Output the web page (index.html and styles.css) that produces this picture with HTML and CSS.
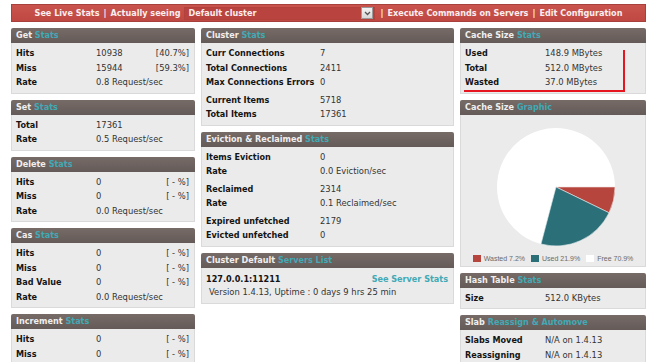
FILE: index.html
```html
<!DOCTYPE html>
<html lang="en">
<head>
    <meta charset="UTF-8">
    <title>phpMemcachedAdmin - Live Stats</title>
    <link rel="stylesheet" href="styles.css">
</head>
<body>

    <div class="topbar">
        <a href="#">See Live Stats</a>
        <span class="sep">|</span>
        <span>Actually seeing</span>
        <span class="cluster-select">
            <span>Default cluster</span>
            <span class="arrow">
                <svg width="7" height="5" viewBox="0 0 7 5"><path d="M1 1 L3.5 3.5 L6 1" fill="none" stroke="#555" stroke-width="1.3"/></svg>
            </span>
        </span>
        <span class="sep">|</span>
        <a href="#">Execute Commands on Servers</a>
        <span class="sep">|</span>
        <a href="#">Edit Configuration</a>
    </div>

    <div class="columns">
        <!-- colonna sinistra -->
        <div class="col col-left">
            <div class="panel">
                <div class="panel-head">Get <span class="hl">Stats</span></div>
                <div class="panel-body">
                    <div class="row"><span class="label">Hits</span><span class="value">10938</span><span class="pct">[40.7%]</span></div>
                    <div class="row"><span class="label">Miss</span><span class="value">15944</span><span class="pct">[59.3%]</span></div>
                    <div class="row"><span class="label">Rate</span><span class="value">0.8 Request/sec</span></div>
                </div>
            </div>
            <div class="panel">
                <div class="panel-head">Set <span class="hl">Stats</span></div>
                <div class="panel-body">
                    <div class="row"><span class="label">Total</span><span class="value">17361</span></div>
                    <div class="row"><span class="label">Rate</span><span class="value">0.5 Request/sec</span></div>
                </div>
            </div>
            <div class="panel">
                <div class="panel-head">Delete <span class="hl">Stats</span></div>
                <div class="panel-body">
                    <div class="row"><span class="label">Hits</span><span class="value">0</span><span class="pct">[ - %]</span></div>
                    <div class="row"><span class="label">Miss</span><span class="value">0</span><span class="pct">[ - %]</span></div>
                    <div class="row"><span class="label">Rate</span><span class="value">0.0 Request/sec</span></div>
                </div>
            </div>
            <div class="panel">
                <div class="panel-head">Cas <span class="hl">Stats</span></div>
                <div class="panel-body">
                    <div class="row"><span class="label">Hits</span><span class="value">0</span><span class="pct">[ - %]</span></div>
                    <div class="row"><span class="label">Miss</span><span class="value">0</span><span class="pct">[ - %]</span></div>
                    <div class="row"><span class="label">Bad Value</span><span class="value">0</span><span class="pct">[ - %]</span></div>
                    <div class="row"><span class="label">Rate</span><span class="value">0.0 Request/sec</span></div>
                </div>
            </div>
            <div class="panel">
                <div class="panel-head">Increment <span class="hl">Stats</span></div>
                <div class="panel-body">
                    <div class="row"><span class="label">Hits</span><span class="value">0</span><span class="pct">[ - %]</span></div>
                    <div class="row"><span class="label">Miss</span><span class="value">0</span><span class="pct">[ - %]</span></div>
                </div>
            </div>
        </div>

        <!-- colonna centrale -->
        <div class="col col-mid">
            <div class="panel">
                <div class="panel-head">Cluster <span class="hl">Stats</span></div>
                <div class="panel-body">
                    <div class="group">
                        <div class="row"><span class="label">Curr Connections</span><span class="value">7</span></div>
                        <div class="row"><span class="label">Total Connections</span><span class="value">2411</span></div>
                        <div class="row"><span class="label">Max Connections Errors</span><span class="value">0</span></div>
                    </div>
                    <div class="group">
                        <div class="row"><span class="label">Current Items</span><span class="value">5718</span></div>
                        <div class="row"><span class="label">Total Items</span><span class="value">17361</span></div>
                    </div>
                </div>
            </div>
            <div class="panel">
                <div class="panel-head">Eviction &amp; Reclaimed <span class="hl">Stats</span></div>
                <div class="panel-body">
                    <div class="group">
                        <div class="row"><span class="label">Items Eviction</span><span class="value">0</span></div>
                        <div class="row"><span class="label">Rate</span><span class="value">0.0 Eviction/sec</span></div>
                    </div>
                    <div class="group">
                        <div class="row"><span class="label">Reclaimed</span><span class="value">2314</span></div>
                        <div class="row"><span class="label">Rate</span><span class="value">0.1 Reclaimed/sec</span></div>
                    </div>
                    <div class="group">
                        <div class="row"><span class="label">Expired unfetched</span><span class="value">2179</span></div>
                        <div class="row"><span class="label">Evicted unfetched</span><span class="value">0</span></div>
                    </div>
                </div>
            </div>
            <div class="panel">
                <div class="panel-head">Cluster Default <span class="hl">Servers List</span></div>
                <div class="panel-body servers">
                    <div class="server-row">
                        <span class="label">127.0.0.1:11211</span>
                        <a href="#" class="server-link">See Server Stats</a>
                    </div>
                    <div class="server-info">Version 1.4.13, Uptime : 0 days 9 hrs 25 min</div>
                </div>
            </div>
        </div>

        <!-- colonna destra -->
        <div class="col col-right">
            <div class="panel cache-size">
                <div class="panel-head">Cache Size <span class="hl">Stats</span></div>
                <div class="panel-body">
                    <div class="row"><span class="label">Used</span><span class="value">148.9 MBytes</span></div>
                    <div class="row"><span class="label">Total</span><span class="value">512.0 MBytes</span></div>
                    <div class="row"><span class="label">Wasted</span><span class="value">37.0 MBytes</span></div>
                </div>
                <div class="marker"></div>
            </div>
            <div class="panel">
                <div class="panel-head">Cache Size <span class="hl">Graphic</span></div>
                <div class="panel-body chart">
                    <svg class="pie" width="184" height="136" viewBox="0 0 184 136">
                        <path d="M95 72 L79.97 129.05 A59 59 0 1 1 154 72 Z" fill="#ffffff"/>
                        <path d="M95 72 L154 72 A59 59 0 0 1 148.07 97.79 Z" fill="#b5453d" stroke="#f3e3e1" stroke-width="0.6"/>
                        <path d="M95 72 L148.07 97.79 A59 59 0 0 1 79.97 129.05 Z" fill="#2b6f79" stroke="#e6eeee" stroke-width="0.6"/>
                    </svg>
                    <div class="legend">
                        <span class="key"><i class="sw sw-wasted"></i>Wasted 7.2%</span>
                        <span class="key"><i class="sw sw-used"></i>Used 21.9%</span>
                        <span class="key"><i class="sw sw-free"></i>Free 70.9%</span>
                    </div>
                </div>
            </div>
            <div class="panel">
                <div class="panel-head">Hash Table <span class="hl">Stats</span></div>
                <div class="panel-body">
                    <div class="row"><span class="label">Size</span><span class="value">512.0 KBytes</span></div>
                </div>
            </div>
            <div class="panel">
                <div class="panel-head">Slab <span class="hl">Reassign &amp; Automove</span></div>
                <div class="panel-body">
                    <div class="row"><span class="label">Slabs Moved</span><span class="value">N/A on 1.4.13</span></div>
                    <div class="row"><span class="label">Reassigning</span><span class="value">N/A on 1.4.13</span></div>
                </div>
            </div>
        </div>
    </div>

</body>
</html>
```

FILE: styles.css
```css
/* Stili generali */
body {
    margin: 0;
    background-color: #ffffff;
    font-family: "DejaVu Sans", Verdana, sans-serif;
    font-size: 8.4px;
    color: #333333;
    overflow: hidden;
}
a {
    text-decoration: none;
    color: inherit;
}

/* Barra superiore */
.topbar {
    margin: 4px 2px 0 11px;
    height: 16px;
    background: linear-gradient(#c9534d, #bf4842);
    border: 1px solid #a8403b;
    display: flex;
    justify-content: center;
    align-items: center;
    gap: 3px;
    font-weight: bold;
    font-size: 8.1px;
    color: #fbeeee;
}
.topbar .sep {
    margin: 0 1px;
}
.cluster-select {
    width: 191px;
    height: 13px;
    box-sizing: border-box;
    margin: 0 1px;
    padding-left: 3px;
    border: 1px solid #b3423d;
    background-color: #b9433e;
    display: flex;
    align-items: center;
    justify-content: space-between;
}
.cluster-select .arrow {
    width: 10px;
    height: 10px;
    margin-right: 1px;
    background: linear-gradient(#f4f4f4, #d8d8d8);
    border: 1px solid #9a9a9a;
    display: flex;
    align-items: center;
    justify-content: center;
}

/* Colonne */
.columns {
    display: flex;
    gap: 6px;
    padding: 6px 0 0 11px;
}
.col-left {
    width: 184px;
}
.col-mid {
    width: 253px;
}
.col-right {
    width: 186px;
}

/* Pannelli */
.panel {
    margin-bottom: 6px;
    position: relative;
}
.panel-head {
    height: 15px;
    line-height: 15px;
    padding-left: 5px;
    background: linear-gradient(#766b67, #645a57);
    border-radius: 2px 2px 0 0;
    color: #f1efee;
    font-weight: bold;
    font-size: 8.1px;
    white-space: nowrap;
}
.hl {
    color: #42a9b5;
}
.panel-body {
    background-color: #ebebeb;
    border: 1px solid #dadada;
    border-top: none;
    padding: 3px 5px 3px 4px;
}
.row {
    display: flex;
    align-items: center;
    height: 14.5px;
    white-space: nowrap;
}
.label {
    width: 80px;
    flex-shrink: 0;
    font-weight: bold;
    font-size: 8.1px;
    color: #141414;
}
.col-mid .label {
    width: 114px;
}
.value {
    flex: 1;
}
.pct {
    text-align: right;
}
.group + .group {
    margin-top: 3px;
}

/* Lista server */
.servers {
    padding: 4px 5px 5px 4px;
}
.server-row {
    display: flex;
    justify-content: space-between;
    align-items: center;
    height: 14px;
}
.server-row .label {
    width: auto;
}
.server-link {
    color: #42a9b5;
    font-weight: bold;
    font-size: 8.1px;
}
.server-info {
    line-height: 12px;
    padding-left: 3px;
}

/* Segno rosso sulla cache */
.marker {
    position: absolute;
    left: 4px;
    top: 22px;
    width: 161px;
    height: 42px;
    box-sizing: border-box;
    border-right: 2px solid #e5161f;
    border-bottom: 2px solid #e5161f;
}

/* Grafico */
.chart {
    height: 152px;
    box-sizing: border-box;
    padding: 0;
}
.pie {
    display: block;
}
.legend {
    display: flex;
    justify-content: center;
    gap: 6px;
    margin-top: 4px;
    font-family: "Liberation Sans", Arial, sans-serif;
    font-size: 7px;
    color: #6a6a6a;
}
.key {
    display: flex;
    align-items: center;
}
.sw {
    display: inline-block;
    width: 8px;
    height: 7px;
    margin-right: 3px;
}
.sw-wasted {
    background-color: #b5453d;
}
.sw-used {
    background-color: #2b6f79;
}
.sw-free {
    background-color: #ffffff;
}
```
